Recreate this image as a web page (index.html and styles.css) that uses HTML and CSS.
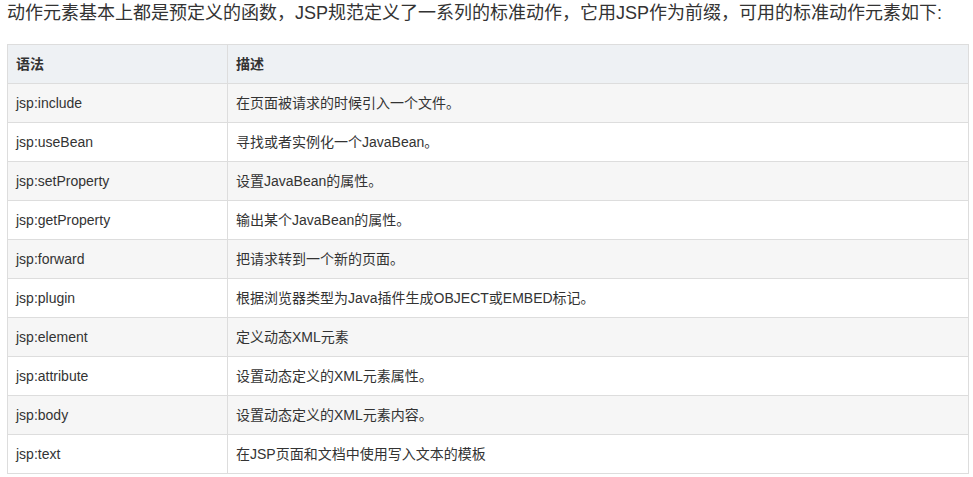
FILE: index.html
```html
<!DOCTYPE html>
<html lang="zh-CN">
<head>
<meta charset="utf-8">
<title>JSP 动作元素</title>
<link rel="stylesheet" href="styles.css">
</head>
<body>
<div class="article">
  <p class="intro">动作元素基本上都是预定义的函数，JSP规范定义了一系列的标准动作，它用JSP作为前缀，可用的标准动作元素如下:</p>
  <table class="reference">
    <thead>
      <tr><th class="col-syntax">语法</th><th>描述</th></tr>
    </thead>
    <tbody>
      <tr><td>jsp:include</td><td>在页面被请求的时候引入一个文件。</td></tr>
      <tr><td>jsp:useBean</td><td>寻找或者实例化一个JavaBean。</td></tr>
      <tr><td>jsp:setProperty</td><td>设置JavaBean的属性。</td></tr>
      <tr><td>jsp:getProperty</td><td>输出某个JavaBean的属性。</td></tr>
      <tr><td>jsp:forward</td><td>把请求转到一个新的页面。</td></tr>
      <tr><td>jsp:plugin</td><td>根据浏览器类型为Java插件生成OBJECT或EMBED标记。</td></tr>
      <tr><td>jsp:element</td><td>定义动态XML元素</td></tr>
      <tr><td>jsp:attribute</td><td>设置动态定义的XML元素属性。</td></tr>
      <tr><td>jsp:body</td><td>设置动态定义的XML元素内容。</td></tr>
      <tr><td>jsp:text</td><td>在JSP页面和文档中使用写入文本的模板</td></tr>
    </tbody>
  </table>
</div>
</body>
</html>
```
FILE: styles.css
```css
html, body {
  margin: 0;
  padding: 0;
  background: #fff;
}
body {
  font-family: "Liberation Sans", "Noto Sans CJK SC", sans-serif;
  color: #333;
}
.article {
  padding: 0 4px 0 7px;
}
.intro {
  margin: 0;
  font-size: 18px;
  line-height: 26px;
  color: #333;
}
.reference {
  margin-top: 18px;
  width: 962px;
  border-collapse: collapse;
  font-size: 14px;
  color: #333;
}
.reference th,
.reference td {
  border: 1px solid #dddddd;
  padding: 8px 8px;
  line-height: 22px;
  text-align: left;
  vertical-align: middle;
}
.reference th {
  background: #eef1f4;
  font-weight: bold;
}
.reference .col-syntax {
  width: 203px;
}
.reference tbody tr:nth-child(odd) td {
  background: #f6f6f6;
}
.reference tbody tr:nth-child(even) td {
  background: #fff;
}
```
